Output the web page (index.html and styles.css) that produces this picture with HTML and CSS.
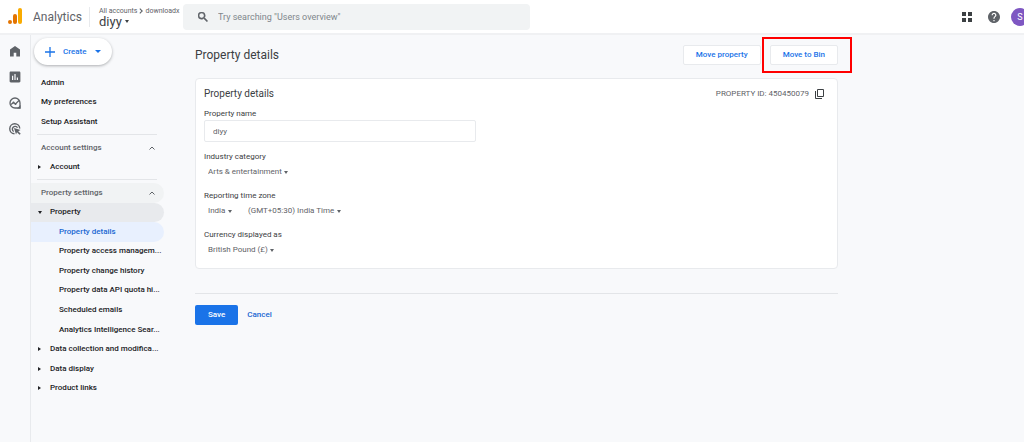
FILE: index.html
```html
<!DOCTYPE html>
<html lang="en">
<head>
<meta charset="utf-8">
<meta name="viewport" content="width=device-width, initial-scale=1">
<title>Analytics – Property details</title>
<link rel="stylesheet" href="styles.css">
</head>
<body>
<header class="topbar">
  <a class="brand" href="#">
    <svg width="14" height="17" viewBox="0 0 14 17" aria-hidden="true"><rect x="10" y="0" width="4" height="16" rx="2" fill="#f9ab00"/><rect x="5" y="6" width="4" height="10" rx="2" fill="#e37400"/><circle cx="2" cy="14" r="2" fill="#e37400"/></svg>
    <span>Analytics</span>
  </a>
  <div class="account">
    <div class="crumbs">All accounts
      <svg width="4" height="6" viewBox="0 0 4 6" aria-hidden="true"><path d="M.8.6 3.2 3 .8 5.4" fill="none" stroke="currentColor" stroke-width="1.1"/></svg>
      downloadx</div>
    <button class="account-name" type="button">diyy <span class="caret"></span></button>
  </div>
  <label class="search">
    <svg width="10" height="10" viewBox="3 3 18 18" aria-hidden="true"><path fill="currentColor" stroke="currentColor" d="M15.5 14h-.79l-.28-.27A6.471 6.471 0 0 0 16 9.5 6.5 6.5 0 1 0 9.5 16c1.61 0 3.09-.59 4.23-1.57l.27.28v.79l5 4.99L20.49 19l-4.99-5zm-6 0C7.01 14 5 11.99 5 9.5S7.01 5 9.5 5 14 7.01 14 9.5 11.99 14 9.5 14z"/></svg>
    <input type="search" aria-label="Search" placeholder="Try searching &quot;Users overview&quot;">
  </label>
  <div class="tools">
    <button class="apps" type="button" aria-label="Apps"><svg width="10" height="10" viewBox="0 0 10 10"><path fill="currentColor" d="M0 0h4v4H0zM6 0h4v4H6zM0 6h4v4H0zM6 6h4v4H6z"/></svg></button>
    <button type="button" aria-label="Help"><svg width="12" height="12" viewBox="2 2 20 20"><path fill="currentColor" d="M12 2C6.48 2 2 6.48 2 12s4.480 10 10 10 10-4.480 10-10S17.520 2 12 2zm1 17h-2v-2h2v2zm2.070-7.750-.9.920C13.450 12.900 13 13.500 13 15h-2v-.5c0-1.100.450-2.100 1.170-2.830l1.240-1.260c.370-.360.590-.860.590-1.410 0-1.100-.9-2-2-2s-2 .9-2 2H8c0-2.210 1.790-4 4-4s4 1.790 4 4c0 .880-.360 1.680-.930 2.250z"/></svg></button>
    <button class="avatar" type="button">S</button>
  </div>
</header>
<div class="shell">
  <nav class="rail" aria-label="Sections">
    <a href="#" aria-label="Home"><svg width="12" height="12" viewBox="0 0 12 12"><path fill="currentColor" d="M6 1 1 4.500v7h3.700V7.700h2.600v3.800H11v-7z"/></svg></a>
    <a href="#" aria-label="Reports"><svg width="12" height="12" viewBox="2 2 20 20"><path fill="currentColor" d="M19 3H5c-1.100 0-2 .9-2 2v14c0 1.100.9 2 2 2h14c1.100 0 2-.9 2-2V5c0-1.100-.9-2-2-2zM9 17H7v-7h2v7zm4 0h-2V7h2v10zm4 0h-2v-4h2v4z"/></svg></a>
    <a href="#" aria-label="Explore"><svg width="12" height="12" viewBox="0 0 24 24"><path fill="none" stroke="currentColor" stroke-width="2.600" d="M12 2a10 10 0 1 0 0 20h10V12A10 10 0 0 0 12 2z"/><path d="m4 15 5-4 4 3 7-7" fill="none" stroke="currentColor" stroke-width="2.600"/><circle cx="9" cy="11" r="2" fill="currentColor"/><circle cx="13" cy="14" r="2" fill="currentColor"/><path d="M16 23h7v-7z" fill="currentColor"/></svg></a>
    <a href="#" aria-label="Advertising"><svg width="12" height="12" viewBox="0 0 24 24"><path fill="none" stroke="currentColor" stroke-width="2.800" d="M11 21.500A10 10 0 1 1 21.500 11M9.500 17A5.500 5.500 0 1 1 17 9.500"/><path fill="currentColor" d="m10 10 13 4-4.500 2.500 5 5-2.500 2-5-5L14 23z"/></svg></a>
  </nav>
  <nav class="sidebar" aria-label="Admin">
    <button class="create" type="button"><svg width="10" height="10" viewBox="0 0 10 10" aria-hidden="true"><path d="M5 0v10M0 5h10" stroke="currentColor" stroke-width="1.300"/></svg><span>Create</span><span class="caret"></span></button>
    <ul class="menu general">
      <li><a href="#">Admin</a></li>
      <li><a href="#">My preferences</a></li>
      <li><a href="#">Setup Assistant</a></li>
    </ul>
    <ul class="menu account-menu">
      <li><button class="group" type="button">Account settings <svg width="6" height="4" viewBox="0 0 6 4" aria-hidden="true"><path d="M.5 3.500 3 1l2.500 2.500" fill="none" stroke="currentColor"/></svg></button></li>
      <li><a class="branch" href="#">Account</a></li>
    </ul>
    <ul class="menu property-menu">
      <li><button class="group shaded" type="button">Property settings <svg width="6" height="4" viewBox="0 0 6 4" aria-hidden="true"><path d="M.5 3.500 3 1l2.500 2.500" fill="none" stroke="currentColor"/></svg></button></li>
      <li><a class="branch open" href="#">Property</a></li>
      <li><a class="leaf current" href="#" aria-current="page">Property details</a></li>
      <li><a class="leaf" href="#">Property access managem...</a></li>
      <li><a class="leaf" href="#">Property change history</a></li>
      <li><a class="leaf" href="#">Property data API quota hi...</a></li>
      <li><a class="leaf" href="#">Scheduled emails</a></li>
      <li><a class="leaf" href="#">Analytics Intelligence Sear...</a></li>
      <li><a class="branch" href="#">Data collection and modifica...</a></li>
      <li><a class="branch" href="#">Data display</a></li>
      <li><a class="branch" href="#">Product links</a></li>
    </ul>
  </nav>
  <main class="content">
    <div class="page-head">
      <h1>Property details</h1>
      <button class="outlined" type="button">Move property</button>
      <div class="marked"><button class="outlined" type="button">Move to Bin</button></div>
    </div>
    <form>
      <section class="card">
        <div class="card-head">
          <h2>Property details</h2>
          <span class="prop-id">PROPERTY ID: 450450079</span>
          <button class="copy" type="button" aria-label="Copy property ID"><svg width="9" height="10" viewBox="0 0 9 10"><path d="M2.500.500h6v7h-6zM.500 2v7.500h6.500" fill="none" stroke="currentColor"/></svg></button>
        </div>
        <div class="field">
          <label for="name">Property name</label>
          <input id="name" type="text" value="diyy">
        </div>
        <div class="field">
          <label for="industry">Industry category</label>
          <div class="picks"><span class="pick"><select id="industry"><option>Arts &amp; entertainment</option></select><span class="caret"></span></span></div>
        </div>
        <div class="field">
          <label for="country">Reporting time zone</label>
          <div class="picks"><span class="pick"><select id="country"><option>India</option></select><span class="caret"></span></span><span class="pick"><select aria-label="Time zone"><option>(GMT+05:30) India Time</option></select><span class="caret"></span></span></div>
        </div>
        <div class="field">
          <label for="currency">Currency displayed as</label>
          <div class="picks"><span class="pick"><select id="currency"><option>British Pound (£)</option></select><span class="caret"></span></span></div>
        </div>
      </section>
      <div class="actions">
        <button class="save" type="submit">Save</button>
        <button class="cancel" type="button">Cancel</button>
      </div>
    </form>
  </main>
</div>
</body>
</html>
```
FILE: styles.css
```css
* { box-sizing: border-box; }
body {
  margin: 0;
  min-height: 100vh;
  display: flex;
  flex-direction: column;
  background: #f8f9fb;
  color: #3c4043;
  font: 8px/12px Roboto, sans-serif;
  overflow-x: hidden;
}
button, input, select { font: inherit; color: inherit; margin: 0; padding: 0; border: 0; background: none; }
a { color: inherit; text-decoration: none; }
svg { display: block; flex: none; }
ul { list-style: none; margin: 0; padding: 0; }
h1, h2 { margin: 0; font-weight: 400; }
.caret { flex: none; border: 2px solid transparent; border-top: 3px solid currentColor; border-bottom: 0; }

/* Top bar */
.topbar {
  display: flex;
  align-items: center;
  height: 35px;
  padding-left: 8px;
  background: #fff;
  border-bottom: 2px solid #f0f1f3;
  overflow: hidden;
}
.brand { display: flex; align-items: center; gap: 11px; width: 81px; color: #5f6368; font-size: 12px; line-height: 16px; }
.account { width: 94px; height: 20px; padding-left: 9px; border-left: 1px solid #e8eaed; display: flex; flex-direction: column; justify-content: center; }
.crumbs { display: flex; align-items: center; gap: 2px; color: #5f6368; font-size: 7px; line-height: 10px; white-space: nowrap; }
.account-name { display: flex; align-items: center; gap: 3px; font-size: 13px; line-height: 12px; }
.search { display: flex; align-items: center; gap: 10px; width: 347px; height: 26px; padding: 0 15px; border-radius: 4px; background: #f1f3f4; color: #5f6368; }
.search input { flex: 1; outline: 0; font-size: 9px; }
.search input::placeholder { color: #80868b; }
.tools { display: flex; align-items: center; gap: 11px; margin-left: auto; margin-right: -5px; color: #5f6368; }
.tools button { flex: none; }
.tools .apps { margin-right: 5px; color: #3c4043; }
.tools .avatar { width: 18px; height: 18px; border-radius: 50%; background: #7e57c2; color: #fff; font-size: 9px; }

/* Navigation */
.shell { flex: 1; display: flex; }
.rail { width: 31px; padding: 10px 9px; display: flex; flex-direction: column; gap: 14px; border-right: 1px solid #e8eaed; color: #5f6368; }
.sidebar { width: 133px; padding-top: 3px; font-weight: 500; color: #202124; }
.create { display: flex; align-items: center; gap: 8px; height: 27px; margin: 0 0 8px 3px; padding: 0 11px; border-radius: 14px; background: #fff; box-shadow: 0 1px 3px #3c404366; color: #1a73e8; }
.create .caret { border-width: 3px 3px 0; }
.menu { display: grid; grid-template-columns: minmax(0, 1fr); grid-auto-rows: 1fr; }
.menu a, .group { display: flex; align-items: center; width: 100%; height: 100%; padding-left: 10px; border-radius: 0 10px 10px 0; white-space: nowrap; }
.general, .account-menu { padding-bottom: 3px; background: linear-gradient(#e3e5e8, #e3e5e8) 6px 100% / 120px 1px no-repeat; }
.general { min-height: 62px; }
.account-menu { min-height: 42px; margin: 3px 0; }
.property-menu { min-height: 215px; }
.menu .group { justify-content: space-between; padding-right: 9px; color: #5f6368; }
.menu .shaded { background: #f1f3f4; }
.menu .branch { gap: 8px; padding-left: 7px; }
.branch::before { content: ""; border: 2px solid transparent; border-left: 3px solid currentColor; border-right: 0; margin-right: 1px; }
.branch.open::before { border: 2px solid transparent; border-top: 3px solid currentColor; border-bottom: 0; margin-right: 0; }
.menu .open { background: #e8eaed; }
.menu .leaf { padding-left: 28px; }
.menu .current { background: #e8f0fe; color: #1967d2; }

/* Property form */
.content { flex: 1; min-width: 0; max-width: 674px; padding: 10px 0 0 31px; }
.page-head { display: flex; align-items: center; gap: 9px; margin-bottom: 13px; }
h1 { margin-right: auto; font-size: 12px; line-height: 16px; }
.outlined { height: 20px; padding: 0 12px; border: 1px solid #e8eaed; border-radius: 2px; background: #fff; color: #1a73e8; font-weight: 500; }
.marked { position: relative; }
.marked::after { content: ""; position: absolute; inset: -8px -14px -8px -8px; border: 2px solid #f00; pointer-events: none; }
.card { border: 1px solid #e8eaed; border-radius: 4px; background: #fff; padding: 8px 13px 0 8px; }
.card-head { display: flex; align-items: center; gap: 6px; margin-bottom: 7px; }
h2 { margin-right: auto; font-size: 10px; line-height: 14px; }
.prop-id { color: #5f6368; }
.field { margin-bottom: 9px; }
.field label { display: block; }
.field input { display: block; width: 272px; height: 22px; padding: 0 8px; border: 1px solid #e8eaed; border-radius: 2px; color: #5f6368; }
.picks { display: flex; gap: 16px; padding: 3px 4px; color: #5f6368; }
.pick { display: flex; align-items: center; gap: 2px; }
.pick select { appearance: none; height: 12px; }
.actions { display: flex; align-items: center; gap: 9px; margin-top: 24px; padding-top: 11px; border-top: 1px solid #e3e5e8; font-weight: 500; }
.save { height: 20px; padding: 0 13px; border-radius: 2px; background: #1a73e8; color: #fff; }
.cancel { color: #1967d2; }
```
